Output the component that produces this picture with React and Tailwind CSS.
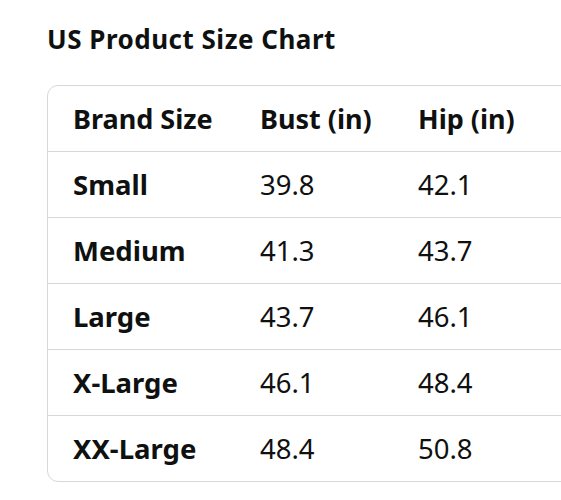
const rows = [
  ["Small", "39.8", "42.1"],
  ["Medium", "41.3", "43.7"],
  ["Large", "43.7", "46.1"],
  ["X-Large", "46.1", "48.4"],
  ["XX-Large", "48.4", "50.8"],
];

const App = () => {
  return (
    <div className="w-[561px] h-[500px] overflow-hidden bg-white text-[#0f1111] font-['Noto_Sans',sans-serif]">
      <div className="pt-[23px] pl-[47px]">
        <h1 className="text-[26px] leading-[32px] font-bold tracking-[0.5px]">US Product Size Chart</h1>
        <div className="mt-[30px] w-[620px] border border-[#d5d9d9] rounded-[11px]">
          <div className="flex items-center h-[66px] border-b border-[#d5d9d9] text-[27px] leading-[38px] font-bold">
            <div className="w-[212px] pl-[25px]">Brand Size</div>
            <div className="w-[158px]">Bust (in)</div>
            <div>Hip (in)</div>
          </div>
          {rows.map((r, i) => (
            <div
              key={r[0]}
              className={
                i < rows.length - 1
                  ? "flex items-center h-[66px] border-b border-[#d5d9d9] text-[27.5px] leading-[38px]"
                  : "flex items-center h-[65px] text-[27.5px] leading-[38px]"
              }
            >
              <div className="w-[212px] pl-[25px] font-bold">{r[0]}</div>
              <div className="w-[158px]">{r[1]}</div>
              <div>{r[2]}</div>
            </div>
          ))}
        </div>
      </div>
    </div>
  );
};

export default App;
